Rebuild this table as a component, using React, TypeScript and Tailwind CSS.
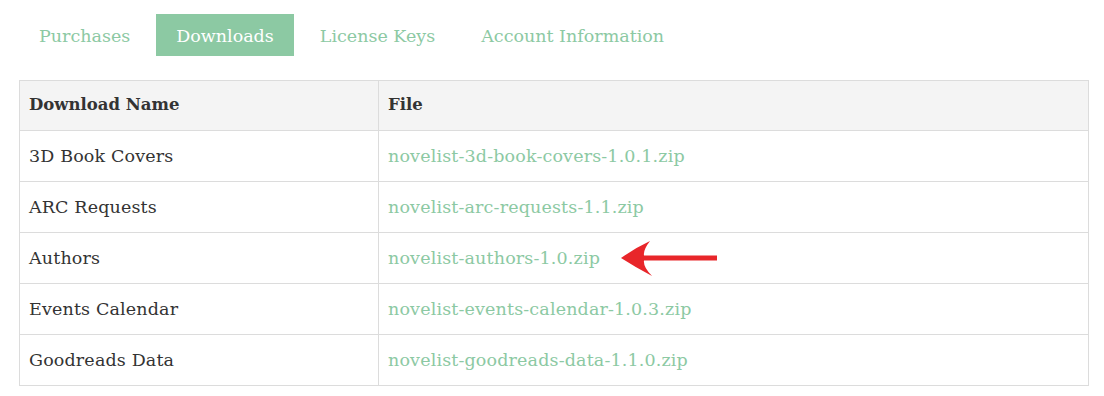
import { FC } from 'react'

const tabs = ['Purchases', 'Downloads', 'License Keys', 'Account Information']

const rows = [
	{ name: '3D Book Covers', file: 'novelist-3d-book-covers-1.0.1.zip' },
	{ name: 'ARC Requests', file: 'novelist-arc-requests-1.1.zip' },
	{ name: 'Authors', file: 'novelist-authors-1.0.zip', arrow: true },
	{ name: 'Events Calendar', file: 'novelist-events-calendar-1.0.3.zip' },
	{ name: 'Goodreads Data', file: 'novelist-goodreads-data-1.1.0.zip' },
]

const Arrow: FC = () => (
	<svg width="100" height="38" viewBox="0 0 100 38" className="ml-[19px] shrink-0">
		<path
			d="M2 19 Q16 9 31 2 Q24 11 25 16.5 L98 16.5 L98 21.5 L25 21.5 Q24 28 33 37 Q16 28 2 19 Z"
			fill="#e8262a"
		/>
	</svg>
)

const App: FC = () => {
	return (
		<div className="h-[396px] w-[1104px] bg-white pl-[19px] pt-[14px] font-['DejaVu_Serif',serif] text-[#333]">
			<div className="flex gap-[6px]">
				{tabs.map((tab) => (
					<div
						key={tab}
						className={`flex h-[42px] items-center px-[20px] pt-[2px] text-[17.5px] ${
							tab === 'Downloads' ? 'bg-[#8cc9a3] text-white' : 'text-[#8cc9a3]'
						}`}
					>
						{tab}
					</div>
				))}
			</div>

			<table className="mt-[24px] w-[1070px] border-collapse text-[17.5px] tracking-[0.15px]">
				<thead>
					<tr className="h-[50px] bg-[#f4f4f4]">
						<th className="w-[359px] border border-[#dcdcdc] px-[9px] text-left text-[16.5px] font-bold tracking-normal">
							Download Name
						</th>
						<th className="border border-[#dcdcdc] px-[9px] text-left text-[16.5px] font-bold tracking-normal">File</th>
					</tr>
				</thead>
				<tbody>
					{rows.map((row) => (
						<tr key={row.name} className="h-[51px]">
							<td className="border border-[#dcdcdc] px-[9px]">{row.name}</td>
							<td className="border border-[#dcdcdc] px-[9px]">
								<div className="flex items-center">
									<span className="text-[#8cc9a3]">{row.file}</span>
									{row.arrow && <Arrow />}
								</div>
							</td>
						</tr>
					))}
				</tbody>
			</table>
		</div>
	)
}

export default App
